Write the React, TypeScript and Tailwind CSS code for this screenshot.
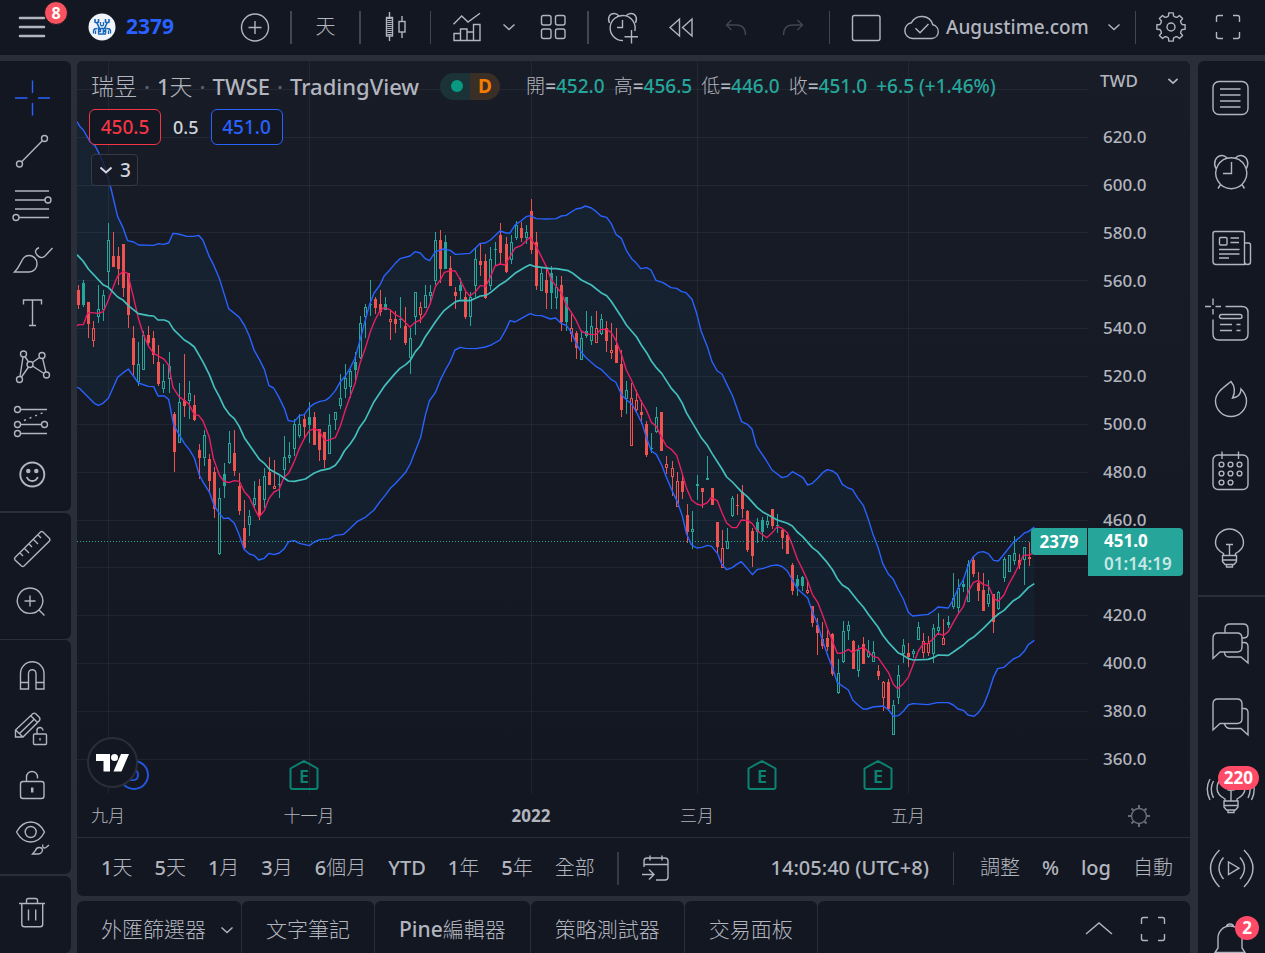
import React from 'react';

type Kind = 'g' | 'G' | 'r' | 'R';
type Candle = [number, number, number, number, Kind];

// high, body top, body bottom, low - in thirds of a pixel below the series origin
const candles: Candle[] = [
  [285, 300, 345, 357, 'R'], [270, 279, 345, 350, 'G'], [336, 336, 402, 444, 'R'], [393, 414, 453, 471, 'r'],
  [285, 357, 381, 399, 'g'], [300, 315, 360, 393, 'g'], [99, 150, 246, 291, 'g'], [126, 198, 231, 231, 'R'],
  [171, 198, 237, 285, 'R'], [162, 162, 294, 321, 'R'], [249, 249, 375, 414, 'R'], [408, 444, 525, 558, 'R'],
  [456, 522, 576, 588, 'g'], [423, 435, 540, 540, 'g'], [408, 435, 459, 471, 'R'], [423, 444, 495, 522, 'R'],
  [465, 516, 582, 588, 'R'], [522, 573, 597, 609, 'g'], [486, 528, 567, 609, 'g'], [666, 672, 786, 846, 'R'],
  [579, 636, 759, 759, 'g'], [492, 630, 648, 681, 'R'], [573, 609, 633, 687, 'g'], [615, 645, 690, 693, 'R'],
  [762, 780, 804, 867, 'R'], [720, 735, 804, 828, 'g'], [792, 807, 873, 909, 'R'], [831, 846, 957, 984, 'R'],
  [894, 924, 1092, 1095, 'g'], [819, 852, 888, 924, 'G'], [723, 759, 819, 822, 'g'], [720, 789, 843, 858, 'R'],
  [849, 888, 963, 975, 'R'], [930, 1014, 1074, 1077, 'R'], [960, 978, 1005, 1038, 'g'], [873, 924, 945, 954, 'g'],
  [867, 888, 978, 990, 'R'], [834, 858, 930, 954, 'g'], [801, 846, 885, 885, 'R'], [810, 888, 897, 897, 'r'],
  [858, 882, 885, 924, 'g'], [738, 801, 840, 864, 'g'], [756, 795, 804, 819, 'g'], [687, 702, 777, 798, 'g'],
  [672, 702, 738, 744, 'g'], [672, 687, 711, 744, 'R'], [636, 681, 705, 759, 'G'], [666, 681, 765, 765, 'R'],
  [717, 717, 780, 813, 'R'], [726, 726, 810, 834, 'R'], [672, 705, 792, 792, 'g'], [666, 666, 690, 720, 'g'],
  [552, 624, 648, 657, 'g'], [522, 564, 597, 624, 'g'], [537, 543, 591, 624, 'g'], [486, 516, 540, 573, 'G'],
  [378, 399, 504, 507, 'g'], [342, 351, 381, 444, 'g'], [270, 342, 345, 378, 'g'], [321, 327, 354, 372, 'R'],
  [300, 342, 366, 378, 'R'], [321, 342, 360, 360, 'G'], [360, 387, 396, 450, 'r'], [363, 387, 402, 429, 'R'],
  [321, 387, 390, 414, 'g'], [351, 408, 459, 465, 'R'], [414, 444, 504, 552, 'g'], [306, 306, 381, 435, 'g'],
  [336, 351, 375, 399, 'r'], [285, 315, 354, 354, 'g'], [285, 306, 318, 342, 'g'], [126, 150, 273, 285, 'g'],
  [120, 150, 237, 279, 'R'], [135, 156, 237, 237, 'G'], [198, 234, 288, 288, 'R'], [291, 306, 318, 357, 'R'],
  [264, 285, 303, 327, 'G'], [306, 321, 381, 387, 'R'], [306, 321, 381, 408, 'g'], [174, 207, 288, 321, 'g'],
  [162, 213, 225, 258, 'R'], [192, 213, 324, 327, 'R'], [171, 207, 288, 300, 'g'], [156, 177, 180, 228, 'g'],
  [99, 135, 189, 222, 'R'], [141, 162, 246, 249, 'R'], [135, 156, 210, 222, 'g'], [93, 105, 144, 150, 'g'],
  [96, 114, 144, 156, 'R'], [105, 126, 144, 162, 'g'], [27, 63, 180, 192, 'R'], [126, 156, 288, 300, 'R'],
  [234, 249, 303, 303, 'g'], [228, 270, 309, 357, 'R'], [228, 249, 309, 357, 'G'], [258, 291, 324, 357, 'g'],
  [258, 285, 396, 423, 'R'], [321, 321, 396, 423, 'G'], [372, 414, 432, 456, 'r'], [423, 429, 474, 507, 'R'],
  [423, 444, 510, 510, 'g'], [363, 423, 438, 444, 'G'], [378, 408, 453, 465, 'g'], [363, 414, 459, 459, 'r'],
  [372, 387, 432, 435, 'g'], [393, 414, 453, 486, 'R'], [399, 480, 489, 507, 'r'], [414, 465, 519, 519, 'R'],
  [480, 522, 660, 681, 'R'], [573, 600, 627, 672, 'g'], [579, 624, 768, 768, 'r'], [600, 630, 660, 669, 'r'],
  [630, 666, 675, 702, 'R'], [693, 702, 795, 801, 'R'], [729, 774, 777, 789, 'g'], [651, 681, 726, 729, 'g'],
  [666, 666, 783, 783, 'R'], [798, 822, 834, 852, 'r'], [813, 834, 861, 918, 'r'], [846, 873, 951, 951, 'r'],
  [852, 873, 906, 927, 'R'], [942, 975, 1026, 1059, 'R'], [963, 1017, 1026, 1077, 'g'], [855, 882, 888, 930, 'G'],
  [894, 894, 906, 954, 'R'], [798, 864, 870, 870, 'G'], [894, 894, 945, 945, 'R'], [996, 996, 1071, 1092, 'R'],
  [1020, 1074, 1134, 1134, 'r'], [1014, 1053, 1077, 1077, 'g'], [918, 924, 978, 981, 'g'], [912, 945, 948, 975, 'R'],
  [885, 906, 957, 984, 'R'], [960, 963, 1080, 1086, 'R'], [1014, 1023, 1098, 1131, 'R'], [984, 996, 1026, 1059, 'G'],
  [981, 990, 1026, 1053, 'G'], [978, 993, 1005, 1014, 'g'], [957, 957, 1008, 1017, 'R'], [972, 1005, 1008, 1029, 'G'],
  [1017, 1020, 1044, 1077, 'R'], [1026, 1035, 1092, 1092, 'R'], [1119, 1125, 1203, 1215, 'R'], [1155, 1167, 1188, 1218, 'G'],
  [1158, 1161, 1188, 1203, 'G'], [1170, 1200, 1209, 1212, 'r'], [1248, 1248, 1299, 1311, 'R'], [1284, 1305, 1329, 1395, 'R'],
  [1296, 1347, 1368, 1377, 'R'], [1320, 1344, 1371, 1383, 'R'], [1329, 1332, 1452, 1458, 'R'], [1407, 1449, 1509, 1512, 'g'],
  [1293, 1323, 1416, 1419, 'g'], [1293, 1305, 1323, 1350, 'g'], [1350, 1353, 1437, 1437, 'R'], [1365, 1380, 1443, 1461, 'g'],
  [1341, 1362, 1422, 1422, 'R'], [1350, 1383, 1401, 1404, 'g'], [1353, 1386, 1416, 1416, 'g'], [1425, 1443, 1458, 1470, 'R'],
  [1473, 1476, 1524, 1563, 'r'], [1467, 1476, 1557, 1563, 'R'], [1530, 1545, 1635, 1635, 'g'], [1425, 1455, 1524, 1542, 'g'],
  [1347, 1365, 1392, 1419, 'g'], [1359, 1389, 1401, 1431, 'R'], [1377, 1383, 1392, 1404, 'g'], [1296, 1311, 1350, 1350, 'g'],
  [1329, 1353, 1389, 1404, 'r'], [1338, 1359, 1389, 1398, 'r'], [1302, 1314, 1392, 1419, 'g'], [1269, 1311, 1323, 1335, 'g'],
  [1287, 1344, 1365, 1365, 'r'], [1278, 1296, 1305, 1314, 'G'], [1149, 1224, 1251, 1257, 'g'], [1167, 1194, 1254, 1272, 'g'],
  [1164, 1182, 1191, 1206, 'G'], [1110, 1122, 1236, 1236, 'g'], [1101, 1110, 1152, 1161, 'R'], [1146, 1179, 1203, 1233, 'R'],
  [1149, 1200, 1263, 1263, 'R'], [1170, 1212, 1242, 1251, 'g'], [1212, 1212, 1296, 1329, 'R'], [1203, 1206, 1257, 1260, 'g'],
  [1101, 1107, 1164, 1176, 'g'], [1095, 1095, 1146, 1146, 'g'], [1038, 1089, 1113, 1125, 'g'], [1092, 1110, 1125, 1137, 'R'],
  [1071, 1071, 1110, 1185, 'g'], [1056, 1101, 1107, 1128, 'R'],
];

const upperBand =
  '0,-205 9,-190 19,-180 39,-145 54,-133 66,-110 84,-70 103,0 122,80 138,113 152,152 170,156 185,165 230,166 245,161 258,163 275,159 288,130 304,132 330,139 350,139 365,136 378,151 397,200 409,223 428,268 455,356 487,382 502,405 517,438 532,482 547,508 562,538 576,587 590,594 606,622 622,655 634,692 652,695 667,677 682,674 697,652 712,641 729,634 745,631 757,623 775,602 790,575 805,558 820,533 833,507 847,458 865,390 877,346 891,309 909,285 922,257 939,239 955,220 969,206 999,198 1014,185 1030,189 1045,206 1058,212 1075,185 1099,177 1120,181 1135,193 1179,190 1210,160 1225,159 1240,150 1269,123 1288,129 1299,129 1315,104 1332,93 1347,80 1359,77 1378,86 1408,87 1437,86 1453,78 1467,76 1497,57 1513,54 1525,48 1543,54 1558,65 1572,78 1589,82 1603,101 1617,133 1633,145 1648,181 1664,206 1677,218 1691,236 1709,233 1722,240 1737,271 1758,278 1782,293 1799,295 1814,305 1827,308 1845,328 1859,370 1872,422 1891,470 1905,515 1921,543 1935,552 1953,590 1967,618 1994,695 2011,703 2025,717 2038,766 2048,782 2067,810 2085,840 2101,852 2115,863 2131,859 2146,845 2161,853 2178,863 2192,885 2206,880 2222,865 2237,848 2251,839 2267,843 2281,853 2296,883 2313,894 2326,898 2343,925 2359,946 2374,988 2388,1033 2404,1075 2417,1120 2434,1152 2449,1168 2464,1200 2479,1227 2494,1267 2507,1278 2553,1273 2569,1263 2583,1251 2614,1254 2629,1228 2644,1194 2659,1169 2672,1130 2689,1100 2704,1087 2719,1085 2734,1091 2750,1111 2764,1113 2779,1095 2809,1057 2827,1043 2842,1029 2854,1025 2872,1011';

const lowerBand =
  '0,592 7,595 52,640 64,646 78,640 94,625 109,592 122,562 139,548 154,537 169,558 184,579 214,589 230,590 243,618 262,618 275,628 290,705 306,733 322,760 337,779 352,804 367,855 379,878 397,906 412,948 427,970 440,986 455,984 472,1000 487,1036 501,1078 517,1092 531,1096 545,1110 562,1105 576,1090 591,1094 607,1089 622,1076 635,1055 652,1052 667,1060 697,1067 712,1056 729,1049 757,1046 775,1036 800,1033 820,1015 840,995 865,982 891,960 909,935 924,917 940,895 954,882 986,847 1000,822 1015,783 1031,742 1044,680 1057,633 1075,608 1091,568 1105,540 1120,514 1134,480 1150,472 1165,475 1197,476 1225,471 1240,466 1269,450 1287,418 1299,392 1314,396 1332,386 1359,371 1375,376 1393,377 1420,387 1436,384 1453,401 1468,406 1483,427 1498,461 1513,487 1528,504 1558,530 1572,538 1602,568 1616,576 1634,615 1649,630 1665,643 1681,672 1695,700 1709,745 1723,783 1738,793 1754,825 1770,866 1786,904 1801,935 1816,978 1828,1030 1843,1064 1859,1074 1875,1072 1891,1066 1904,1069 1921,1090 1934,1122 1949,1139 1966,1133 1979,1123 1993,1115 2009,1133 2026,1154 2040,1139 2059,1135 2083,1127 2101,1125 2116,1130 2131,1143 2146,1170 2161,1196 2192,1224 2206,1265 2222,1302 2236,1350 2254,1402 2267,1435 2281,1478 2314,1500 2327,1530 2343,1545 2358,1557 2371,1557 2387,1551 2419,1548 2435,1560 2449,1579 2464,1577 2479,1564 2494,1545 2507,1541 2553,1544 2581,1538 2614,1538 2629,1545 2643,1557 2659,1561 2673,1575 2691,1579 2704,1568 2719,1547 2735,1507 2749,1463 2762,1436 2781,1432 2809,1407 2827,1399 2842,1384 2854,1364 2872,1351';

const basis =
  '0,194 18,213 34,237 78,284 94,292 122,321 139,331 154,347 184,371 215,377 230,378 243,390 262,390 275,395 290,419 322,450 337,459 352,471 367,497 379,518 397,554 412,592 427,620 442,652 457,673 472,686 487,710 502,743 547,808 562,820 577,838 607,854 634,873 652,874 685,867 700,857 712,849 729,842 757,836 775,826 789,807 802,783 820,761 833,742 847,713 864,690 891,635 909,608 924,586 954,551 969,535 986,524 1000,511 1015,485 1030,468 1045,440 1059,420 1075,396 1090,376 1102,361 1120,347 1136,335 1150,331 1179,332 1210,318 1227,316 1241,307 1269,284 1286,274 1314,250 1344,232 1359,224 1375,230 1393,232 1420,236 1438,236 1474,242 1485,248 1513,270 1543,285 1572,308 1589,317 1602,333 1633,380 1648,405 1679,441 1693,465 1709,488 1723,513 1737,532 1754,550 1783,595 1801,615 1816,640 1828,668 1874,745 1891,766 1905,790 1935,837 1949,861 1966,876 1993,905 2011,920 2040,952 2056,965 2101,990 2131,1000 2146,1008 2161,1026 2177,1040 2206,1073 2222,1085 2251,1118 2267,1140 2281,1166 2296,1185 2314,1196 2343,1233 2359,1251 2374,1273 2403,1311 2417,1335 2434,1357 2463,1388 2479,1396 2494,1406 2509,1410 2553,1408 2569,1403 2583,1395 2614,1396 2629,1386 2659,1365 2674,1351 2689,1342 2719,1315 2749,1285 2764,1272 2781,1261 2809,1232 2826,1222 2854,1193 2872,1181';

const movingAverage =
  '0,408 5,404 19,404 31,372 37,367 64,370 79,365 94,330 109,290 122,258 139,244 152,250 169,320 184,385 199,433 214,468 230,490 262,508 275,526 288,592 306,620 335,641 352,674 365,676 378,693 397,742 409,805 427,855 440,873 455,878 472,872 487,874 502,905 517,922 532,955 546,981 562,962 576,925 591,906 607,898 620,864 636,848 652,814 667,775 682,745 697,722 712,716 727,723 743,751 753,751 775,743 790,708 805,660 820,618 835,578 848,523 865,475 880,425 894,390 909,362 922,353 939,359 954,373 969,381 999,412 1014,397 1030,390 1045,372 1060,340 1075,290 1090,270 1102,247 1120,242 1135,243 1150,270 1165,302 1178,318 1195,306 1210,286 1225,290 1240,262 1254,228 1269,222 1284,225 1299,200 1314,174 1332,167 1344,156 1359,142 1378,170 1408,230 1423,270 1438,290 1454,310 1468,345 1483,367 1498,392 1512,423 1528,431 1543,434 1558,433 1572,418 1589,418 1603,428 1617,452 1633,492 1648,540 1663,570 1678,605 1693,635 1709,662 1723,697 1738,709 1753,740 1768,768 1784,779 1799,796 1814,845 1828,893 1844,930 1859,942 1874,946 1891,938 1902,923 1921,932 1935,968 1949,999 1966,1013 1979,1013 1993,990 2011,991 2026,1001 2038,1020 2054,1032 2069,1043 2084,1030 2101,1010 2114,1014 2131,1028 2146,1065 2161,1107 2176,1137 2191,1170 2206,1213 2222,1237 2236,1273 2251,1315 2267,1355 2281,1390 2296,1389 2314,1378 2327,1387 2344,1377 2359,1372 2374,1385 2389,1400 2403,1403 2434,1447 2449,1483 2462,1496 2479,1481 2494,1462 2509,1423 2524,1383 2538,1362 2553,1360 2569,1346 2583,1330 2599,1336 2614,1325 2629,1297 2644,1271 2659,1250 2674,1205 2689,1177 2704,1172 2719,1184 2734,1187 2751,1225 2764,1234 2781,1215 2794,1185 2812,1153 2826,1125 2839,1096 2857,1095 2872,1088';

const PANE_W = 1011;
const PANE_H = 733;
const SERIES_TOP = 129;

const gridRows = [28, 76, 124, 171, 219, 267, 315, 363, 411, 459, 506, 554, 602, 650, 698];
const gridCols = [31, 232, 454, 620, 831];

const bandArea = upperBand + ' ' + lowerBand.split(' ').reverse().join(' ');

const Chart: React.FC = () => (
  <svg
    viewBox={`0 0 ${PANE_W} ${PANE_H}`}
    preserveAspectRatio="none"
    className="absolute inset-0 h-full w-full"
    role="img"
    aria-label="2379"
  >
    <g fill="#f0f3fa" fillOpacity="0.06" shapeRendering="crispEdges">
      {gridRows.map((y) => (
        <rect key={y} x={0} y={y} width={PANE_W} height={1} />
      ))}
      {gridCols.map((x) => (
        <rect key={x} x={x} y={0} width={1} height={PANE_H} />
      ))}
    </g>
    <g transform={`translate(0 ${SERIES_TOP}) scale(${1 / 3})`}>
      <polygon points={bandArea} fill="#2196f3" fillOpacity="0.06" />
    </g>
    <g shapeRendering="crispEdges">
      {candles.map(([high, top, bottom, low, kind], i) => {
        const x = 1 + 5 * i + Math.floor(0.47 + 0.0301 * i);
        const y = (v: number) => SERIES_TOP + Math.round(v / 3);
        const color = kind === 'g' || kind === 'G' ? '#26a69a' : '#ef5350';
        const h = Math.max(1, y(bottom) - y(top));
        const hollow = (kind === 'g' || kind === 'r') && h > 2;
        return (
          <g key={i} fill={color}>
            <rect x={x} y={y(high)} width={1} height={Math.max(0, y(top) - y(high))} />
            <rect x={x} y={y(bottom)} width={1} height={Math.max(0, y(low) - y(bottom))} />
            <rect x={x - 1} y={y(top)} width={3} height={h} />
            {hollow && <rect x={x} y={y(top) + 1} width={1} height={h - 2} fill="#18202d" />}
          </g>
        );
      })}
    </g>
    <g transform={`translate(0 ${SERIES_TOP}) scale(${1 / 3})`} fill="none" strokeWidth="4.2" strokeLinejoin="round">
      <polyline points={movingAverage} stroke="#e91e63" />
      <polyline points={upperBand} stroke="#2962ff" />
      <polyline points={lowerBand} stroke="#2962ff" />
      <polyline points={basis} stroke="#43bfbd" strokeWidth="5" />
    </g>
    <line x1="0" x2="954" y1="480.5" y2="480.5" stroke="#26a69a" strokeDasharray="1 2" shapeRendering="crispEdges" />
  </svg>
);

interface IconProps {
  children: React.ReactNode;
  className?: string;
}

const Icon: React.FC<IconProps> = ({ children, className = 'h-10 w-10' }) => (
  <svg
    className={`${className} shrink-0 overflow-visible`}
    viewBox="0 0 40 40"
    fill="none"
    stroke="currentColor"
    strokeWidth="1.4"
    aria-hidden="true"
  >
    {children}
  </svg>
);

const Chevron: React.FC<{ className?: string; width?: number }> = ({ className = 'h-3 w-3', width = 1.4 }) => (
  <svg className={`${className} shrink-0`} viewBox="0 0 12 12" fill="none" stroke="currentColor" strokeWidth={width} aria-hidden="true">
    <path d="M.5 3.500 6 8.500l5.500-5" />
  </svg>
);

// Latin runs in medium, Chinese runs in light
const Label: React.FC<{ text: string }> = ({ text }) => (
  <>
    {text.split(/([\u4e00-\u9fff]+)/).filter(Boolean).map((run, i) => (
      <span key={i} className={/[\u4e00-\u9fff]/.test(run) ? 'font-light' : 'font-medium'}>{run}</span>
    ))}
  </>
);

const Corners = () => (
  <Icon>
    <path d="M8.500 15v-4.500a2 2 0 0 1 2-2H15M25 8.500h4.500a2 2 0 0 1 2 2V15M31.500 25v4.500a2 2 0 0 1-2 2H25M15 31.500h-4.500a2 2 0 0 1-2-2V25" />
  </Icon>
);

// eight flat teeth around a ring
const gearPoints = Array.from({ length: 8 }, (_, i) => {
  const at = (deg: number, r: number) => {
    const a = ((i * 45 + deg) * Math.PI) / 180;
    return `${(20 + r * Math.cos(a)).toFixed(2)},${(20 + r * Math.sin(a)).toFixed(2)}`;
  };
  return [at(-13, 11.3), at(-9, 14.3), at(9, 14.3), at(13, 11.3), at(22.5, 10.8)].join(' ');
}).join(' ');

const leftTools: { label: string; icon: React.ReactNode; active?: boolean }[][] = [
  [
    { label: '十字', active: true, icon: <path d="M20.500 2.500V15M20.500 25v12.500M3 20h12.500M26 20h12" /> },
    { label: '趨勢線', icon: <><circle cx="7.500" cy="32" r="3" /><circle cx="32.500" cy="6.500" r="3" /><path d="M9.700 29.800 30.300 8.700" /></> },
    { label: '斐波那契', icon: <><path d="M3 5h34M3 14h30M3 23h34M7 31.500h30" /><circle cx="36" cy="14" r="3" /><circle cx="4" cy="31.500" r="3" /></> },
    { label: '筆刷', icon: <path d="M2.500 32H17a8 8 0 0 0 8-8.500c0-5-4-8-8-8-8 0-7 9.500-14.500 16.500zM27 7.500c-4 2-4.500 4.500-2 7.500s5.500 3.500 8 1l7.500-8" /> },
    { label: '文字', icon: <path d="M11.500 10.500V6h18v4.500M20.500 6v25.500M17 31.500h7" /> },
    {
      label: '型態',
      icon: <>
        <circle cx="11.500" cy="6" r="3" /><circle cx="30" cy="7.500" r="3" /><circle cx="18" cy="16.500" r="3" />
        <circle cx="7.500" cy="31.500" r="3" /><circle cx="34.500" cy="27" r="3" />
        <path d="M11 9 8 28.500M13 8.500l3.500 5.500M20.500 14.500l7-5M30.600 10.400l3.300 13.700M20.500 18l11.500 7.500M16.500 19 9.500 29" />
      </>,
    },
    {
      label: '預測',
      icon: <>
        <circle cx="5.500" cy="7.500" r="3" /><circle cx="5.500" cy="22.500" r="3" /><circle cx="32.500" cy="22.500" r="3" /><circle cx="5.500" cy="31.500" r="3" />
        <path d="M8.500 7.500H35M8.500 22.500h21M8.500 31.500H35" /><path d="m12 18.500 22-9" strokeDasharray="2 4" />
      </>,
    },
    {
      label: '圖示',
      icon: <g strokeWidth="1.9">
        <circle cx="20.300" cy="18.500" r="12" /><circle cx="16.300" cy="15" r="1.300" fill="currentColor" /><circle cx="24.300" cy="15" r="1.300" fill="currentColor" />
        <path d="M14.800 21c2 5.300 9 5.300 11 0" />
      </g>,
    },
  ],
  [
    { label: '測量', icon: <path d="M3 29.500 28.500 4a2 2 0 0 1 2.500 0l6.500 6.500a2 2 0 0 1 0 2.500L12 38a2 2 0 0 1-2.500 0L3 32a2 2 0 0 1 0-2.500zM8 25l3 3M12.500 20.500l4.500 4.500M17 16l3 3M21.500 11.500 26 16M26 7l3 3" /> },
    { label: '放大', icon: <path d="M18 6a12.700 12.700 0 1 0 .1 0zM27 28l5.500 5.500M18 13.500v11M12.500 19h11" /> },
  ],
  [
    { label: '磁鐵', icon: <path d="M8.500 34V18.500a11.700 11.700 0 0 1 23.500 0V34h-8V18.500a3.700 3.700 0 0 0-7.500 0V34zM8.500 27.500h8M24 27.500h8" /> },
    {
      label: '繪圖模式',
      icon: <>
        <path d="M3.500 28v-7L21 4.500q1.500-1 3 .5l3.500 3.500q1 1.500 0 3L11 28zM19 7l6.500 6.500M3.500 21l7.500 7M7 25 22.500 10" />
        <rect x="21.500" y="25" width="13" height="10.500" rx="1" /><path d="M25 25v-3.500a3 3 0 0 1 6 0M28 29v2.500" />
      </>,
    },
    { label: '鎖定', icon: <><rect x="8.500" y="18.500" width="23.500" height="17" rx="2.500" /><path d="M14.500 18.500V14a5.500 5.500 0 0 1 11 0v1.500" /><path d="M20.200 24.500v5" strokeWidth="2.500" /></> },
    {
      label: '隱藏',
      icon: <>
        <path d="M4.500 15Q10 5 18.700 5 27.500 5 32.500 15 27.500 25 18.700 25 10 25 4.500 15z" /><circle cx="18.700" cy="15" r="5.500" />
        <path d="M20.500 37h5.500c3 0 4.500-2.500 4.500-4.500-1-3-6-2.500-7 1zM31 27.500c-1.500 2.500 1 4.500 3 3l3-2.500" />
      </>,
    },
  ],
  [{ label: '移除', icon: <path d="M7 10.500h26M9.800 10.500v20.700a2.500 2.500 0 0 0 2.500 2.500h15.900a2.500 2.500 0 0 0 2.500-2.500V10.500M14.500 10.500V7.500q0-2 2-2h7q2 0 2 2v3M16.500 16.500v11M23.700 16.500v11" /> }],
];

const leftSections = ['pt-2.5 pb-2 mb-0.5', 'pt-2 pb-2.5 mb-px', 'pt-2 pb-2.5 mb-0.5', 'pt-2.5 grow'];

const clock = (
  <path d="M20.200 4.700a15.500 15.500 0 1 0 .1 0zM4.800 15.500C2 10 4.500 3 10.500 2.500q3-.3 5.500 2.500M35.500 15.500C38.500 10 36 3 30 2.500q-3-.3-5.500 2.500M20.500 9v11.500H12M9.300 32 7 35.500M31.200 32l2.300 3.500" />
);

const bulb = <path d="M12.500 27.500v-2C8 23 4.500 19.500 4.500 15a14 14 0 0 1 28 0c0 4.500-3.500 8-8 10.500v2M11.500 27.500h14v6l-2.500 3h-9l-2.500-3zM11.500 32h14M15.500 36.500v2.500h6v-2.500M18.500 27V16.500M15 16.500h7" />;

const rightTop: { label: string; icon: React.ReactNode }[] = [
  { label: '觀察清單', icon: <><rect x="2" y="3.500" width="35" height="33" rx="6" /><path d="M9 11h20.500M9 17h20.500M9 23h20.500M9 29h20.500" /></> },
  { label: '警報', icon: clock },
  { label: '新聞', icon: <><path d="M4 3.500h27.500q2 0 2 2v31H5q-3 0-3-3v-28q0-2 2-2zM33.500 15h4q2 0 2 2v17q0 2.500-3 2.500t-3-2.500" /><rect x="8.500" y="9.500" width="7.500" height="7.500" rx="1" /><path d="M19.500 10h8.500M19.500 14.500h8.500M8 21.500h20.500M8 26h20.500M8 30h10" /></> },
  { label: '數據視窗', icon: <><path d="M14.500 3.500H31q6 0 6 6V31q0 6-6 6H8q-6 0-6-6V16.500M2-4.500v6.500M2 6v5.500M-6 3.500H0M4.500 3.500H10" /><rect x="8.500" y="11.500" width="22.500" height="4" rx="2" /><path d="M9 21.500h12M25.500 21.500h4M9 27.500h12M25.500 27.500h4" /></> },
  { label: '熱門', icon: <path d="M20 3.500C14 8.500 4.500 14 4.500 23a15.500 15.500 0 0 0 31 0c0-5-2.500-9-5.500-12 0 4.500-2.500 8-8.500 9 2.500-5 3-11-1.500-16.500z" /> },
  {
    label: '日曆',
    icon: <>
      <rect x="2" y="2" width="35" height="34.500" rx="5" /><path d="M11-1.500V6M27.500-1.500V6" />
      {[[10.5, 11.5], [19.5, 11.5], [28.5, 11.5], [10.5, 20.5], [19.5, 20.5], [28.5, 20.5], [10.5, 29.5], [19.5, 29.5]].map(([x, y]) => (
        <circle key={`${x}-${y}`} cx={x} cy={y} r="2.400" />
      ))}
    </>,
  },
  { label: '想法', icon: bulb },
];

const rightBottom: { label: string; icon: React.ReactNode; badge?: string }[] = [
  { label: '公開聊天', icon: <path d="M14 11V7q0-5 5-5h13q5 0 5 5v5q0 4-5 4h-1M7 11h19q5 0 5 5v9q0 5-5 5H9l-7 6.500V16q0-5 5-5zM31 20.500h2q4 0 4 4V41l-7-6H18q-4 0-4.500-4.500" /> },
  { label: '私人聊天', icon: <path d="M7 2h19q5 0 5 5v14.500q0 5-5 5H9L2 33V7q0-5 5-5zM31 11.500h2q4 0 4 4V38l-7-6.500H19q-4 0-5.500-4.500" /> },
  { label: '觀點流', badge: '220', icon: <><g transform="translate(1.500 1.500)">{bulb}</g><path d="M2.500 9q-4.500 8 0 17M-1 7q-5.500 10 0 21M37 9q4.500 8 0 17M40.500 7q5.500 10 0 21" /></> },
  { label: '直播', icon: <path d="M17.500 15v12.500L28 21.200zM12.500 10.500q-9 10.500 0 21.500M8.500 3q-18 18 0 37M29 10.500q9 10.500 0 21.500M33 3q18 18 0 37" /> },
  { label: '通知', badge: '2', icon: <path d="M19 4a12 12 0 0 0-12 12v10l-3 4.500h30L31 26V16A12 12 0 0 0 19 4zM15.500 5q0-3 3.500-3t3.500 3M14 31q1 5 5 5t5-5" /> },
];

const prices = ['620.0', '600.0', '580.0', '560.0', '540.0', '520.0', '500.0', '480.0', '460.0', '', '420.0', '400.0', '380.0', '360.0'];
const months = [
  { label: '九月', x: 31 },
  { label: '十一月', x: 232 },
  { label: '2022', x: 454, year: true },
  { label: '三月', x: 620 },
  { label: '五月', x: 831 },
];
const earnings = [227, 685, 801];
const ranges = ['1天', '5天', '1月', '3月', '6個月', 'YTD', '1年', '5年', '全部'];
const tabs = ['文字筆記', 'Pine編輯器', '策略測試器', '交易面板'];
const quotes = [
  { label: '開', value: '452.0' },
  { label: '高', value: '456.5' },
  { label: '低', value: '446.0' },
  { label: '收', value: '451.0' },
];

const pct = (x: number) => `${(x / PANE_W) * 100}%`;

const TopBar: React.FC = () => (
  <header className="flex h-[55px] shrink-0 items-center bg-[#131722] pb-px">
    <button aria-label="選單" className="relative flex w-16 justify-center">
      <Icon><path d="M8 11h24M8 20h24M8 29h24" strokeWidth="2.600" strokeLinecap="round" /></Icon>
      <span className="absolute -top-1.5 left-[44px] flex h-6 w-6 items-center justify-center rounded-full border border-[#131722] bg-[#f7525f] text-base font-bold text-white">8</span>
    </button>
    <button className="flex w-[166px] items-center gap-2.5 pl-6 text-[21px] font-bold text-[#2962ff]">
      <svg className="h-7 w-7" viewBox="0 0 28 28" fill="none" stroke="#1565b8" strokeWidth="1.300" aria-hidden="true">
        <circle cx="14" cy="14" r="13.500" fill="#f0f3fa" stroke="none" />
        <path d="M7 6v3l2 1 1.500-1V6M9 10l2.500 5.500M21 6v3l-2 1-1.500-1V6M19 10l-2.500 5.500" strokeWidth="1.600" />
        <path d="M12.500 9v3q1.500 1.500 3 0V9M5.500 20.500v-3q.5-2 3.500-2M22.500 20.500v-3q-.5-2-3.500-2M7.500 21v-3.500M20.500 21v-3.500M10.500 20.500V16.500h2v2h-2M15.300 20.500v-4l1.200 2 1.200-2v4" />
        <path d="M9.500 15.500h9M10 21h8" />
      </svg>
      2379
    </button>
    <button aria-label="比較" className="flex w-[50px] justify-center"><Icon><circle cx="20" cy="20.500" r="13.500" /><path d="M20 14v13M13.500 20.500h13" /></Icon></button>
    <span className="ml-2.5 h-[33px] w-0.5 bg-[#434651]" />
    <button className="w-[67px] text-xl font-light">天</button>
    <span className="h-[33px] w-0.5 bg-[#434651]" />
    <button aria-label="K線圖" className="flex w-[69px] justify-center">
      <Icon>
        <rect x="10.500" y="10.500" width="6" height="18.500" /><path d="M13.500 5v5.500M13.500 29v5M26 9v5.500M26 25v6" />
        <path d="M13.500 11v18" strokeWidth="4.500" strokeDasharray="1 1" /><rect x="23" y="14.500" width="6" height="10.500" />
      </Icon>
    </button>
    <span className="h-[33px] w-px bg-[#434651]" />
    <button aria-label="技術指標" className="flex w-[72px] justify-center"><Icon><path d="M6.500 17.300 14.700 9l6.300 6 12-8.700M7 33.500v-7h6.500v7zM13.500 33.500V22h6.500v11.500zM20 33.500V25h6.500v8.500zM26.500 33.500v-16H33v16z" /></Icon></button>
    <button aria-label="更多指標" className="w-3"><Chevron /></button>
    <button aria-label="範本" className="flex w-[72px] justify-center pl-1">
      <Icon>{[[8.5, 8.5], [22.5, 8.5], [8.5, 22], [22.5, 22]].map(([x, y]) => <rect key={`${x}-${y}`} x={x} y={y} width="9.500" height="9.500" rx="2" />)}</Icon>
    </button>
    <span className="h-[33px] w-0.5 bg-[#434651]" />
    <button aria-label="新增警報" className="flex w-[68px] justify-center">
      <Icon><path d="M20 33.500A12.500 12.500 0 1 1 31.800 24M6.500 16C4 10.500 7 6.500 11 6.500q3 0 5 2.500M32.500 16C35 10.500 32 6.500 28 6.500q-3 0-5 2.500M19.500 13v7.500H14M28.500 23v13.500M21.500 29.700H35" /></Icon>
    </button>
    <button aria-label="重播" className="flex w-12 justify-center"><Icon><path d="M18.500 12v17L9 20.500zM31 12v17L21.500 20.500z" /></Icon></button>
    <button aria-label="復原" className="flex w-16 justify-center text-[#434651]"><Icon><path d="M14.500 13 9.500 18l5 5M9.500 18H19q9.500 0 9.500 10" /></Icon></button>
    <button aria-label="重做" className="flex w-12 justify-center text-[#434651]"><Icon><path d="M24.500 13l5 5-5 5M29.500 18H20q-9.500 0-9.500 10" /></Icon></button>
    <span className="ml-auto h-[33px] w-px bg-[#434651]" />
    <button aria-label="版面" className="flex w-[71px] justify-center"><Icon><rect x="6.500" y="8.500" width="27.500" height="25" rx="2" /></Icon></button>
    <button className="flex w-[234px] items-center pl-0.5 text-[19px] font-medium">
      <svg className="mr-[5px] h-7 w-[38px] shrink-0" viewBox="0 0 38 28" fill="none" stroke="currentColor" strokeWidth="1.400" aria-hidden="true">
        <path d="M9.500 25.500a7.900 7.900 0 0 1-1-15.700A11.500 11.500 0 0 1 29.800 11.700a7 7 0 0 1-.8 13.800zM12.500 15.200l4.500 4.500 8.500-8.700" />
      </svg>
      Augustime.com
      <Chevron className="mr-[15px] ml-auto h-3 w-3" />
    </button>
    <span className="h-[33px] w-px bg-[#434651]" />
    <button aria-label="設定" className="ml-[15px] flex w-10 justify-center"><Icon><polygon points={gearPoints} strokeLinejoin="round" /><circle cx="20" cy="20" r="4" /></Icon></button>
    <button aria-label="全螢幕" className="flex w-[74px] justify-center"><Corners /></button>
  </header>
);

const Dot = () => <span className="text-[#5d606b]">·</span>;

const Legend: React.FC = () => (
  <div className="absolute top-2 left-3 text-[19px] font-medium">
    <div className="flex h-[34px] items-center whitespace-nowrap">
      <h1 className="mr-[21px] ml-0.5 flex items-center gap-[7px] text-[22px] leading-8">
        <span className="text-[23px] font-light">瑞昱</span>
        <Dot />
        <span>1<span className="text-[23px] font-light">天</span></span>
        <Dot />
        <span>TWSE</span>
        <Dot />
        <span>TradingView</span>
      </h1>
      <span className="mr-[26px] flex h-[27px] w-[60px] overflow-hidden rounded-full">
        <span className="flex w-1/2 items-center justify-center bg-[#1b3237] pl-1"><span className="h-3 w-3 rounded-full bg-[#089981]" /></span>
        <span className="flex w-1/2 items-center bg-[#3a2f27] pl-2 font-bold text-[#f57c00]">D</span>
      </span>
      <dl className="flex gap-[9px]">
        {quotes.map((q) => (
          <div key={q.label} className="flex">
            <dt><span className="font-light">{q.label}</span>=</dt>
            <dd className="text-[#26a69a]">{q.value}</dd>
          </div>
        ))}
        <div className="text-[#26a69a]">+6.5 (+1.46%)</div>
      </dl>
    </div>
    <div className="mt-1.5 flex items-center gap-3">
      <button className="h-9 w-[72px] rounded-md border border-[#f23645] bg-[#131722] text-[#f23645]">450.5</button>
      <span className="text-lg text-[#d1d4dc]">0.5</span>
      <button className="h-9 w-[72px] rounded-md border border-[#2962ff] bg-[#131722] text-[#2962ff]">451.0</button>
    </div>
    <button className="mt-[9px] ml-0.5 flex h-8 w-[47px] items-center justify-center gap-2 rounded border border-[#363a45] bg-[#161a25]/80 pl-0.5 text-[#d1d4dc]">
      <Chevron className="h-3 w-3" width={2} />3
    </button>
  </div>
);

const App: React.FC = () => (
  <div className="flex h-screen flex-col gap-1.5 overflow-hidden bg-[#2a2e39] font-['Noto_Sans','Noto_Sans_CJK_TC',sans-serif] text-[#b2b5be]">
    <TopBar />
    <div className="flex min-h-0 flex-1">
      <nav className="mr-1.5 flex w-[71px] shrink-0 flex-col">
        {leftTools.map((group, g) => (
          <div key={g} className={`rounded-r-md bg-[#131722] ${leftSections[g]}`}>
            {group.map((tool) => (
              <button key={tool.label} aria-label={tool.label} className={`flex h-[54px] w-16 items-center justify-center ${tool.active ? 'text-[#2962ff]' : ''}`}>
                <Icon>{tool.icon}</Icon>
              </button>
            ))}
          </div>
        ))}
      </nav>

      <main className="mr-2 flex min-w-0 flex-1 flex-col gap-[5px]">
        <section className="flex min-h-0 flex-1 flex-col overflow-hidden rounded-md bg-[#131722]">
          <div className="flex min-h-0 flex-1 bg-linear-to-b from-[#181c27] to-[#131722]">
            <div className="relative min-w-0 flex-1">
              <Chart />
              <Legend />
              {earnings.map((x) => (
                <span key={x} className="absolute bottom-[3px] flex h-8 w-8 -translate-x-1/2 items-center justify-center pt-0.5 text-lg font-semibold text-[#0b8370]" style={{ left: pct(x) }}>
                  <svg className="absolute inset-0" viewBox="0 0 32 32" fill="none" stroke="#0b8370" strokeWidth="2" strokeLinejoin="round" aria-hidden="true">
                    <path d="M16 2 29.500 9.500V28q0 2-2 2h-23q-2 0-2-2V9.500z" />
                  </svg>
                  E
                </span>
              ))}
              <span className="absolute bottom-1 left-[42px] flex h-[30px] w-[30px] items-center justify-center rounded-full border-2 border-[#2455dc] bg-[#131722] font-medium text-[#2455dc]">D</span>
              <a href="#tradingview" aria-label="TradingView" className="absolute bottom-1.5 left-2.5 flex h-[51px] w-[51px] items-center justify-center rounded-full border-2 border-[#2a2e39] bg-[#131722] text-white">
                <svg className="h-[18px] w-[33px]" viewBox="0 0 33 18" fill="currentColor" aria-hidden="true">
                  <path d="M0 0h14v17.500H7.500V7H0zM25 0h8l-7.500 17.500h-8z" /><circle cx="18.500" cy="3.500" r="3.500" />
                </svg>
              </a>
              <span className="absolute top-[467px] right-px flex h-[27px] w-14 items-center justify-center rounded-l-sm bg-[#26a69a] text-[17px] font-bold text-white">2379</span>
            </div>
            <div className="relative flex w-[102px] shrink-0 flex-col text-[17px] font-medium">
              <button className="flex h-10 items-center justify-between pr-3 pl-3">TWD<Chevron className="h-2.5 w-2.5" width={2} /></button>
              <ul className="flex flex-1 flex-col justify-between pt-6 pb-[23px] pl-[15px] leading-6">
                {prices.map((p, i) => <li key={i} className="h-6">{p}</li>)}
              </ul>
              <div className="absolute top-[467px] left-0 h-12 w-[95px] rounded-r-sm bg-[#26a69a] pt-px pl-4 leading-[23px] text-white">
                <p className="font-bold">451.0</p>
                <p className="font-semibold text-white/75">01:14:19</p>
              </div>
            </div>
          </div>
          <div className="flex h-11 shrink-0 items-center border-b border-[#2a2e39]">
            <ol className="relative h-6 flex-1 text-[17px]">
              {months.map((m) => (
                <li key={m.label} className={`absolute -translate-x-1/2 leading-6 whitespace-nowrap ${m.year ? 'font-bold' : 'font-light'}`} style={{ left: pct(m.x) }}>{m.label}</li>
              ))}
            </ol>
            <button aria-label="座標設定" className="flex w-[102px] justify-center text-[#6a6d78]">
              <Icon><circle cx="20" cy="20" r="7.500" /><path d="M20 9v3M20 28v3M9 20h3M28 20h3M12.500 12.500l2 2M25.500 25.500l2 2M12.500 27.500l2-2M25.500 14.500l2-2" strokeWidth="2" /></Icon>
            </button>
          </div>
          <div className="flex h-[58px] shrink-0 items-center pt-0.5 pr-[17px] pl-6 text-xl whitespace-nowrap">
            <div className="flex gap-[22px]">
              {ranges.map((r) => <button key={r}><Label text={r} /></button>)}
            </div>
            <span className="ml-[22px] h-[33px] w-0.5 bg-[#363a45]" />
            <button aria-label="前往日期" className="ml-4"><Icon><path d="M9 19v-6q0-3 3-3h18q3 0 3 3v16q0 3-3 3h-9M9 16.500h24M15 7.500v5M27 7.500v5M7 26.500h11.500M14 21.500l5 5-5 5" /></Icon></button>
            <button className="ml-auto font-medium">14:05:40 (UTC+8)</button>
            <span className="ml-6 h-[33px] w-px bg-[#363a45]" />
            <div className="ml-[26px] flex gap-[22px]">
              {['調整', '%', 'log', '自動'].map((t) => <button key={t}><Label text={t} /></button>)}
            </div>
          </div>
        </section>

        <footer className="flex h-[52px] shrink-0 overflow-hidden rounded-t-md text-[21px] whitespace-nowrap">
          <button className="mr-px flex w-[164px] items-center justify-between rounded-t-md bg-[#131722] pt-1.5 pr-2 pl-6 font-light">外匯篩選器<Chevron /></button>
          {tabs.map((t) => <button key={t} className="mr-px rounded-t-md bg-[#131722] px-6 pt-1.5"><Label text={t} /></button>)}
          <div className="flex flex-1 items-center justify-end gap-3.5 rounded-t-md bg-[#131722] pt-1 pr-[17px]">
            <button aria-label="展開"><Icon><path d="m7 25 13-11 13 11" /></Icon></button>
            <button aria-label="最大化"><Corners /></button>
          </div>
        </footer>
      </main>

      <aside className="flex w-[67px] shrink-0 flex-col gap-0.5">
        <div className="rounded-tl-md bg-[#131722] pb-[9px]">
          {rightTop.map((t) => (
            <button key={t.label} aria-label={t.label} className="flex h-[75px] w-full items-center justify-center pr-px pb-px"><Icon>{t.icon}</Icon></button>
          ))}
        </div>
        <div className="min-h-0 grow bg-[#131722] pt-2">
          {rightBottom.map((t) => (
            <button key={t.label} aria-label={t.label} className="relative flex h-[75px] w-full items-center justify-center pr-px pb-px">
              <Icon>{t.icon}</Icon>
              {t.badge && <span className="absolute top-[11px] right-1.5 flex h-6 min-w-6 items-center justify-center rounded-full bg-[#ff4a68] px-1.5 text-[17px] font-bold text-white">{t.badge}</span>}
            </button>
          ))}
        </div>
      </aside>
    </div>
  </div>
);

export default App;
